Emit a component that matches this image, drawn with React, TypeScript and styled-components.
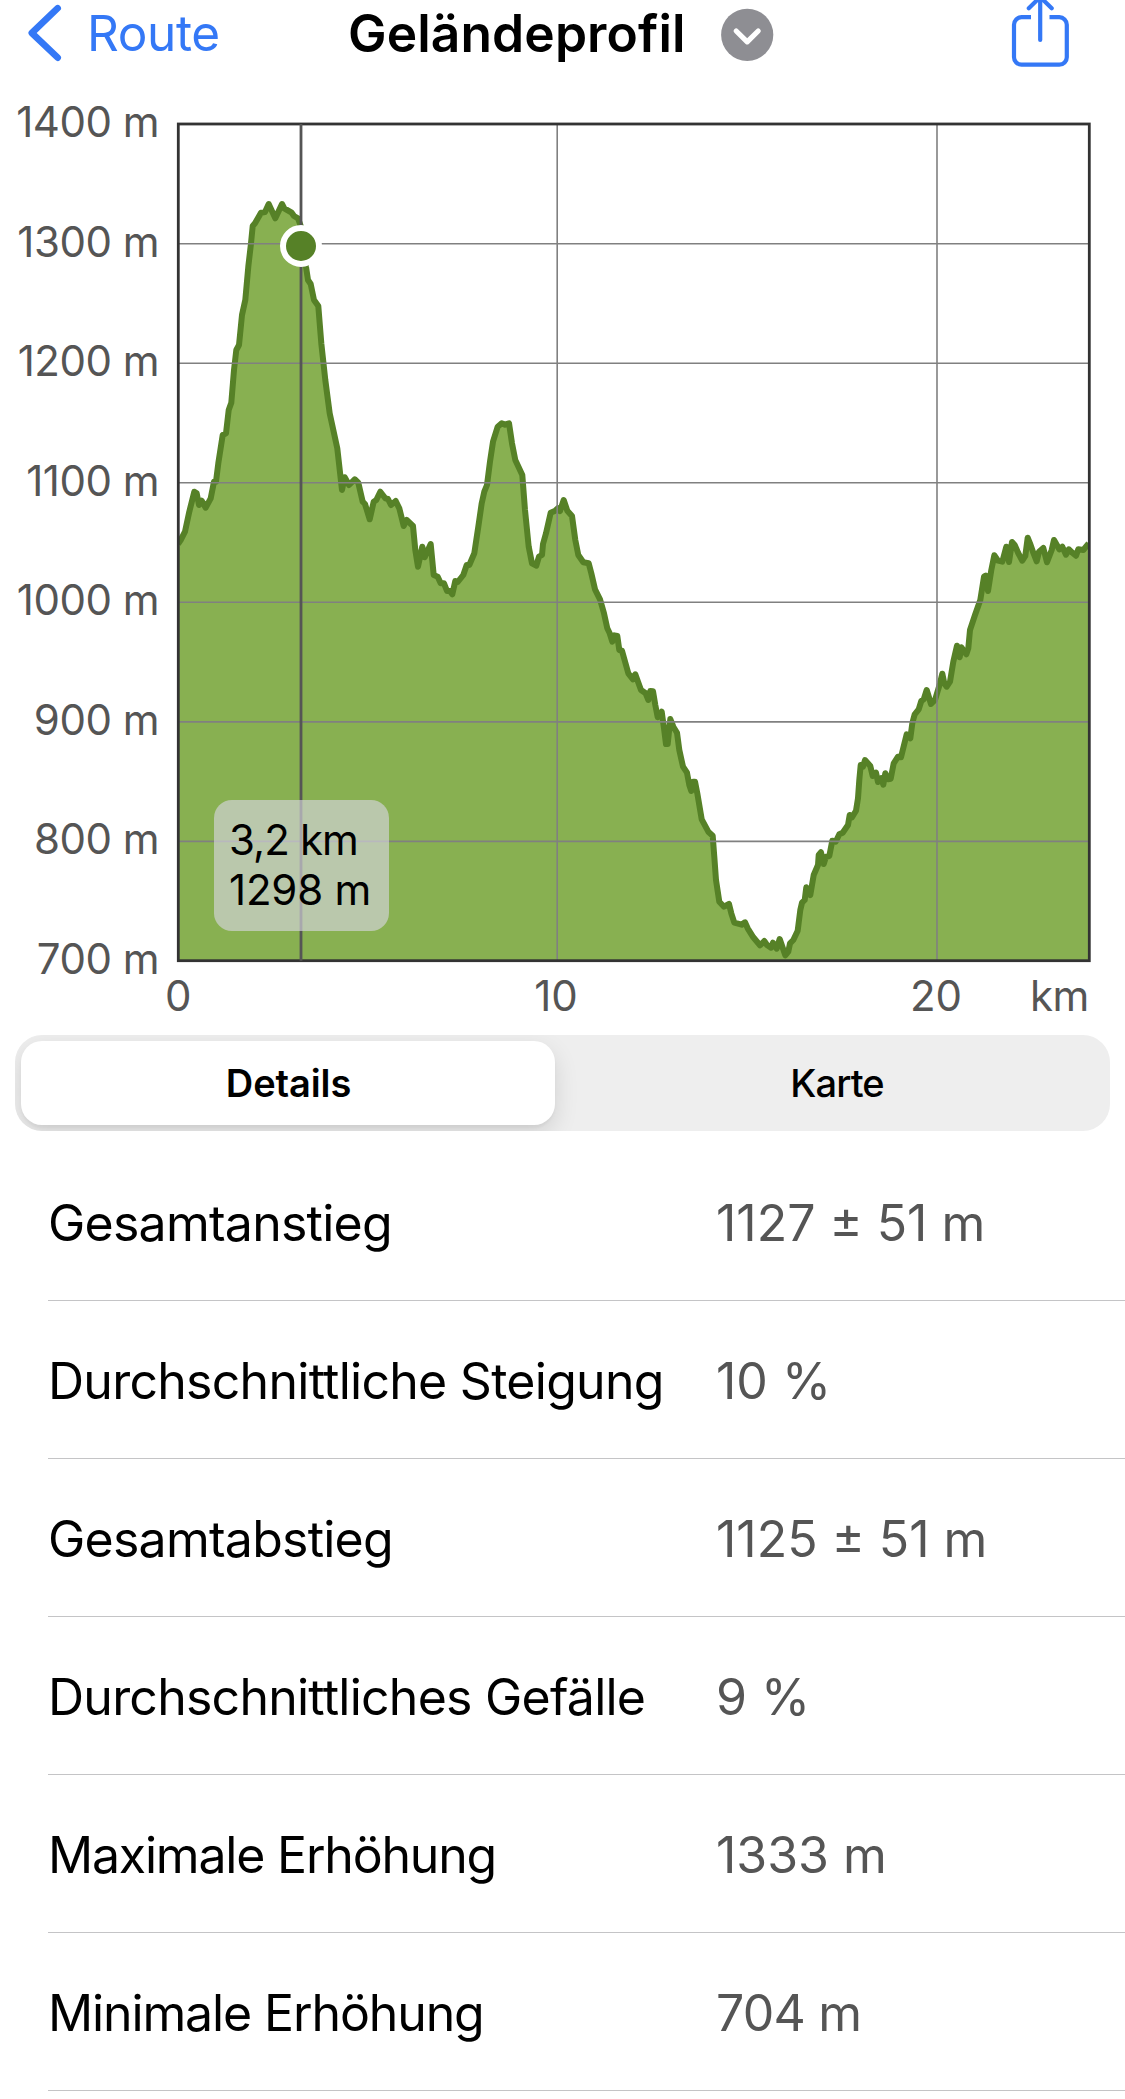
import React from "react";
import styled, { createGlobalStyle } from "styled-components";

const GlobalStyle = createGlobalStyle`
  * { box-sizing: border-box; }
  body {
    margin: 0;
    background: #fff;
    color: #000;
    font-family: Inter, "Liberation Sans", sans-serif;
  }
`;

const Screen = styled.main`
  display: flex;
  flex-direction: column;
  width: 1125px;
  height: 2099px;
  overflow: hidden;
  background: #fff;
`;

const NavBar = styled.header`
  display: grid;
  grid-template-columns: 350px 1fr 113px;
  height: 76px;
  flex: none;
`;

const BackButton = styled.button`
  display: flex;
  align-items: flex-start;
  padding: 0 0 0 26px;
  border: 0;
  background: none;
  color: #3478f6;
  font: 400 49.5px/66px Inter, sans-serif;
  letter-spacing: -0.4px;
  text-align: left;
`;

const BackLabel = styled.span`
  margin-left: 23px;
`;

const TitleGroup = styled.div`
  display: flex;
  align-items: flex-start;
`;

const Title = styled.h1`
  width: 371px;
  margin: 0 0 0 -2px;
  font-size: 51.5px;
  line-height: 66px;
  font-weight: 600;
  letter-spacing: 0.1px;
  white-space: nowrap;
`;

const Icon = styled.svg`
  display: block;
  flex: none;
  overflow: visible;
`;

const ShareButton = styled.button`
  padding: 0;
  border: 0;
  background: none;
  color: #3478f6;
  text-align: left;
`;

const ChartArea = styled.section`
  height: 959px;
  flex: none;
`;

const ChartText = styled.text<{ $dark?: boolean; $spacing?: number }>`
  font-family: Inter, sans-serif;
  font-size: 42px;
  fill: ${(p) => (p.$dark ? "#000" : "#555")};
  letter-spacing: ${(p) => p.$spacing ?? 0}px;
`;

const Segmented = styled.div`
  display: flex;
  flex: none;
  height: 96px;
  margin: 0 15px;
  padding: 6px;
  border-radius: 27px;
  background: #eeeeee;
  overflow: hidden;
`;

const Segment = styled.button<{ $active?: boolean }>`
  width: ${(p) => (p.$active ? "534px" : "auto")};
  flex: ${(p) => (p.$active ? "none" : "1")};
  padding: 0 0 1px ${(p) => (p.$active ? 1 : 15)}px;
  border: 0;
  border-radius: 21px;
  background: ${(p) => (p.$active ? "#fff" : "transparent")};
  box-shadow: ${(p) => (p.$active ? "0 9px 24px rgba(0,0,0,.12), 0 3px 3px rgba(0,0,0,.04)" : "none")};
  color: #000;
  font: ${(p) => (p.$active ? 600 : 500)} 38px/84px Inter, sans-serif;
  letter-spacing: ${(p) => (p.$active ? -0.1 : -0.9)}px;
`;

const StatList = styled.dl`
  margin: 12px 0 0 48px;
`;

const StatRow = styled.div`
  display: grid;
  grid-template-columns: 668px 1fr;
  align-items: center;
  height: 158px;
  padding-top: 2px;
  border-bottom: 1px solid #c4c4c6;
  font-size: 50px;
  line-height: 60px;
  white-space: nowrap;
`;

const StatName = styled.dt<{ $spacing: number }>`
  letter-spacing: ${(p) => p.$spacing}px;
`;

const StatValue = styled.dd<{ $spacing?: number }>`
  margin: 0;
  color: #555;
  letter-spacing: ${(p) => p.$spacing ?? 0}px;
`;

const parse = (source: string, ox: number, oy: number) =>
  source
    .trim()
    .split(/\s+/)
    .map((pair) => pair.split(",").map(Number))
    .map(([x, y]) => [ox + x / 3, oy + y / 3]);

// Elevation samples, stored per section of the route in third-pixel steps.
const ascent = parse(
  `54,1092 62,1080 75,1055 88,995 103,935 110,940 117,975 125,962 137,983 152,955 162,905 168,905
  175,850 188,765 198,760 206,690 214,668 222,570 229,510 237,495 246,405 256,360 265,260 273,190
  278,138 285,130 303,98 315,96 326,72 346,115 366,72 373,85 395,98 402,108 414,115 423,140
  438,260 444,300 452,312 462,360 475,378 484,490 496,600 509,700 532,805 546,930 554,892 567,915
  584,898 595,908 608,965 615,972 629,1018 641,965 649,960 661,935 676,955 684,957 693,975`,
  160,
  180
);
const ridge = parse(
  `17,303 28,325 41,378 50,360 69,378 76,450 84,500 97,440 104,472 122,432 131,525 143,530
  152,550 162,550 171,573 180,573 187,583 196,543 203,546 220,525 230,495 238,495 253,460 265,380
  275,310 283,275 291,255 300,185 309,125 323,80 335,70 345,74 357,70 366,130 376,180 397,225 405,330
  416,440 426,490 439,497 447,470 456,465 459,432 468,400 482,338 496,332 503,325 510,333`,
  390,
  400
);
const descent = parse(
  `11,60 22,92 36,108 46,180 55,225 70,247 86,250 94,280 105,328 120,358 132,400 142,445 149,460
  157,485 163,466 172,468 178,510 186,512 205,580 219,598 226,583 243,630 257,640 265,660 271,633
  279,634 286,675 293,712 305,695 312,745 318,792 323,792 331,717 340,740 351,758 358,810 369,860
  381,878 388,915 394,933 399,905 405,905 412,940 425,1018 445,1055 458,1067 463,1130 468,1200
  478,1265 492,1280 507,1272 514,1300 523,1328 545,1334 555,1327 563,1345 580,1372 600,1396 613,1383
  621,1395 633,1403 639,1388 650,1406 659,1377`,
  560,
  480
);
const finish = parse(
  `16,1306 25,1295 30,1270 40,1260 53,1232 61,1170 66,1148 74,1140 79,1102 91,1125 101,1065
  114,1035 116,1005 123,997 131,1032 138,1010 148,1008 157,962 167,965 178,943 188,938 204,915
  209,885 216,892 228,872 234,835 238,780 242,735 249,740 255,720 271,738 278,768 288,758 294,786
  304,775 310,794 316,760 324,778 332,776 341,730 354,710 363,712 380,643 391,655 397,610 404,583
  416,568 424,543 431,538 440,510 453,552 465,540 480,490 487,461 493,490 500,500 510,485 520,425
  531,377 539,412 544,382 559,403 565,385 570,330 585,285 601,240 612,170 617,167 624,213 634,150
  643,106 654,122 667,125 679,80 687,126 696,66 704,75 715,100 727,122 736,108 743,53 750,70
  760,98 770,124 777,95 790,84 801,127 815,90 822,60 838,88 847,80 858,104 866,88 877,98 888,107
  895,88 910,90 926,70`,
  780,
  520
);

const profile = [...ascent, ...ridge, ...descent, ...finish]
  .map(([x, y]) => `${x.toFixed(1)},${y.toFixed(1)}`)
  .join(" L");

const TOP = 124;
const BOTTOM = 960.7;
const LEFT = 178.3;
const RIGHT = 1089.3;
const STEP = (BOTTOM - TOP) / 7;
const altitudes = [1400, 1300, 1200, 1100, 1000, 900, 800, 700];

const stats = [
  { name: "Gesamtanstieg", value: "1127 ± 51 m", spacing: -0.75 },
  { name: "Durchschnittliche Steigung", value: "10 %", spacing: -0.73 },
  { name: "Gesamtabstieg", value: "1125 ± 51 m", spacing: -0.75 },
  { name: "Durchschnittliches Gefälle", value: "9 %", spacing: -0.76 },
  { name: "Maximale Erhöhung", value: "1333 m", spacing: -1.2 },
  { name: "Minimale Erhöhung", value: "704 m", spacing: -1.12, valueSpacing: -0.8 },
];

function ElevationChart() {
  return (
    <Icon width="1125" height="959" viewBox="0 76 1125 959">
      <defs>
        <clipPath id="plot">
          <rect x={LEFT} y={TOP} width={RIGHT - LEFT} height={BOTTOM - TOP} />
        </clipPath>
      </defs>
      <g clipPath="url(#plot)">
        <path d={`M${LEFT},${BOTTOM} L${profile} L${RIGHT},${BOTTOM} Z`} fill="#88b051" />
        <path d={`M${profile}`} fill="none" stroke="#568127" strokeWidth="6" strokeLinejoin="round" />
      </g>
      <g stroke="#808080" strokeWidth="1.6">
        {altitudes.slice(1, 7).map((a, i) => (
          <line key={a} x1={LEFT} x2={RIGHT} y1={TOP + STEP * (i + 1) + 0.2} y2={TOP + STEP * (i + 1) + 0.2} />
        ))}
        <line x1="557.2" x2="557.2" y1={TOP} y2={BOTTOM} />
        <line x1="937" x2="937" y1={TOP} y2={BOTTOM} />
      </g>
      <rect x={LEFT} y={TOP} width={RIGHT - LEFT} height={BOTTOM - TOP} fill="none" stroke="#333" strokeWidth="2.8" />
      <line x1="301" x2="301" y1={TOP} y2={BOTTOM} stroke="#555" strokeWidth="2.8" />
      <circle cx="301" cy="246" r="18" fill="#568127" stroke="#fff" strokeWidth="6" />
      {altitudes.map((a, i) => (
        <ChartText key={a} x="159" y={TOP + STEP * i + 13} textAnchor="end" $spacing={-0.5}>
          {a} m
        </ChartText>
      ))}
      <ChartText x="178.3" y="1010.7" textAnchor="middle">0</ChartText>
      <ChartText x="556" y="1010.7" textAnchor="middle">10</ChartText>
      <ChartText x="936" y="1010.7" textAnchor="middle">20</ChartText>
      <ChartText x="1088.5" y="1010.7" textAnchor="end" $spacing={-0.7}>km</ChartText>
      <rect x="214" y="800" width="175" height="131" rx="18" fill="rgba(214,213,221,.65)" />
      <ChartText $dark x="229" y="855" $spacing={-0.9}>3,2 km</ChartText>
      <ChartText $dark x="229" y="905" $spacing={-0.2}>1298 m</ChartText>
    </Icon>
  );
}

export default function App() {
  return (
    <Screen>
      <GlobalStyle />
      <NavBar>
        <BackButton>
          <Icon width="38" height="66" viewBox="26 0 38 66" fill="none" stroke="currentColor" strokeWidth="6.6" strokeLinecap="round" strokeLinejoin="round">
            <path d="M57.7 8.2 31.8 33 57.7 57.7" />
          </Icon>
          <BackLabel>Route</BackLabel>
        </BackButton>
        <TitleGroup>
          <Title>Geländeprofil</Title>
          <Icon width="56" height="70" viewBox="719 0 56 70">
            <circle cx="747.2" cy="34.8" r="26.1" fill="#8e8e93" />
            <path d="M736.2 31 747.2 41.8 758.2 31" fill="none" stroke="#fff" strokeWidth="5.2" strokeLinecap="round" strokeLinejoin="round" />
          </Icon>
        </TitleGroup>
        <ShareButton>
          <Icon width="60" height="76" viewBox="1012 0 60 76" fill="none" stroke="currentColor" strokeWidth="4.2" strokeLinecap="round" strokeLinejoin="round">
            <path strokeLinecap="butt" d="M1031 17.2h-9.5a7.5 7.5 0 0 0-7.5 7.5v32.5a7.5 7.5 0 0 0 7.5 7.5h37.8a7.5 7.5 0 0 0 7.5-7.5V24.7a7.5 7.5 0 0 0-7.5-7.5h-9.8" />
            <path d="M1040.2 40V-3M1028.8 8.3 1040.2-3 1051.7 8.3" />
          </Icon>
        </ShareButton>
      </NavBar>
      <ChartArea>
        <ElevationChart />
      </ChartArea>
      <Segmented>
        <Segment $active>Details</Segment>
        <Segment>Karte</Segment>
      </Segmented>
      <StatList>
        {stats.map((s) => (
          <StatRow key={s.name}>
            <StatName $spacing={s.spacing}>{s.name}</StatName>
            <StatValue $spacing={s.valueSpacing}>{s.value}</StatValue>
          </StatRow>
        ))}
      </StatList>
    </Screen>
  );
}
